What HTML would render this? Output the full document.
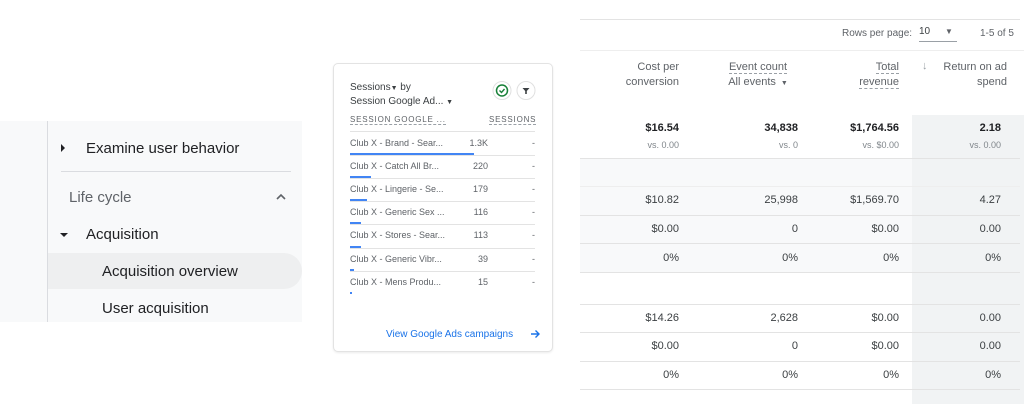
<!DOCTYPE html>
<html><head><meta charset="utf-8"><style>
*{margin:0;padding:0;box-sizing:border-box}
body{width:1024px;height:404px;background:#fff;position:relative;overflow:hidden;font-family:"Liberation Sans",Arial,sans-serif;color:#3c4043}
.a{position:absolute;white-space:nowrap}
.nav{position:absolute;left:0;top:121px;width:302px;height:201px;background:#f8f9fa}
.nt{font-size:15px;color:#202124}
.card{position:absolute;left:333px;top:63px;width:220px;height:289px;border:1px solid #e3e3e3;border-radius:5px;background:#fff;box-shadow:0 1px 2px rgba(0,0,0,.08)}
.r{font-size:9px;color:#5f6368}
.ln{position:absolute;height:1px;background:#e3e3e3}
.bar{position:absolute;height:2px;background:#4285f4}
.t{font-size:11px;color:#3c4043;text-align:right}
.v{font-size:9px;color:#80868b;text-align:right}
</style></head><body>
<div class="nav"></div>
<div class="a" style="left:47px;top:121px;width:1px;height:201px;background:#dadce0"></div>
<div class="a" style="left:48px;top:253px;width:254px;height:36px;background:#eeeff0;border-radius:0 18px 18px 0"></div>
<div class="a" style="left:61px;top:144px;width:0;height:0;border-top:4px solid transparent;border-bottom:4px solid transparent;border-left:4px solid #202124"></div>
<div class="a nt" style="left:86px;top:140px">Examine user behavior</div>
<div class="a" style="left:61px;top:171px;width:230px;height:1px;background:#dadce0"></div>
<div class="a nt" style="left:69px;top:189px;color:#5f6368">Life cycle</div>
<svg class="a" style="left:275px;top:193px" width="12" height="8"><path d="M2 6 L6 2 L10 6" stroke="#5f6368" stroke-width="1.6" fill="none"/></svg>
<div class="a" style="left:60px;top:233px;width:0;height:0;border-left:4px solid transparent;border-right:4px solid transparent;border-top:4px solid #202124"></div>
<div class="a nt" style="left:86px;top:226px">Acquisition</div>
<div class="a nt" style="left:102px;top:263px">Acquisition overview</div>
<div class="a nt" style="left:102px;top:300px">User acquisition</div>

<div class="card"></div>
<div class="a" style="left:350px;top:82px;font-size:10px;color:#3c4043">Sessions<span style="font-size:7px">▼</span> by</div>
<div class="a" style="left:350px;top:96px;font-size:10px;color:#3c4043">Session Google Ad... <span style="font-size:7px">▼</span></div>
<svg class="a" style="left:492px;top:80px" width="46" height="21"><circle cx="10" cy="10.5" r="9" fill="#fff" stroke="#e0e0e0"/><circle cx="10" cy="10.5" r="5.5" fill="none" stroke="#188038" stroke-width="1.5"/><path d="M7.5 10.5l2 2 3-3.5" stroke="#188038" stroke-width="1.4" fill="none"/><circle cx="34" cy="10.5" r="9" fill="#fff" stroke="#e0e0e0"/><path d="M30.5 8h7l-2.7 3v3h-1.6v-3z" fill="#3c4043"/></svg>
<div class="a" style="left:350px;top:115px;font-size:8px;letter-spacing:.8px;color:#5f6368;border-bottom:1px dashed #9aa0a6">SESSION GOOGLE ...</div>
<div class="a" style="left:489px;top:115px;font-size:8px;letter-spacing:.8px;color:#5f6368;border-bottom:1px dashed #9aa0a6">SESSIONS</div>
<div class="ln" style="left:350px;top:131px;width:185px"></div>
<div class="a r" style="left:350px;top:138px">Club X - Brand - Sear...</div><div class="a r" style="left:440px;top:138px;width:48px;text-align:right">1.3K</div><div class="a r" style="left:532px;top:138px">-</div>
<div class="bar" style="left:350px;top:153px;width:124px"></div><div class="ln" style="left:350px;top:155px;width:185px"></div>
<div class="a r" style="left:350px;top:161px">Club X - Catch All Br...</div><div class="a r" style="left:440px;top:161px;width:48px;text-align:right">220</div><div class="a r" style="left:532px;top:161px">-</div>
<div class="bar" style="left:350px;top:176px;width:21px"></div><div class="ln" style="left:350px;top:178px;width:185px"></div>
<div class="a r" style="left:350px;top:184px">Club X - Lingerie - Se...</div><div class="a r" style="left:440px;top:184px;width:48px;text-align:right">179</div><div class="a r" style="left:532px;top:184px">-</div>
<div class="bar" style="left:350px;top:199px;width:17px"></div><div class="ln" style="left:350px;top:201px;width:185px"></div>
<div class="a r" style="left:350px;top:207px">Club X - Generic Sex ...</div><div class="a r" style="left:440px;top:207px;width:48px;text-align:right">116</div><div class="a r" style="left:532px;top:207px">-</div>
<div class="bar" style="left:350px;top:222px;width:11px"></div><div class="ln" style="left:350px;top:224px;width:185px"></div>
<div class="a r" style="left:350px;top:230px">Club X - Stores - Sear...</div><div class="a r" style="left:440px;top:230px;width:48px;text-align:right">113</div><div class="a r" style="left:532px;top:230px">-</div>
<div class="bar" style="left:350px;top:246px;width:11px"></div><div class="ln" style="left:350px;top:248px;width:185px"></div>
<div class="a r" style="left:350px;top:254px">Club X - Generic Vibr...</div><div class="a r" style="left:440px;top:254px;width:48px;text-align:right">39</div><div class="a r" style="left:532px;top:254px">-</div>
<div class="bar" style="left:350px;top:269px;width:4px"></div><div class="ln" style="left:350px;top:271px;width:185px"></div>
<div class="a r" style="left:350px;top:277px">Club X - Mens Produ...</div><div class="a r" style="left:440px;top:277px;width:48px;text-align:right">15</div><div class="a r" style="left:532px;top:277px">-</div>
<div class="bar" style="left:350px;top:292px;width:2px"></div>
<div class="a" style="left:386px;top:329px;font-size:10px;color:#1a73e8">View Google Ads campaigns</div>
<svg class="a" style="left:529px;top:328px" width="12" height="12"><path d="M2 6h8M6.5 2.5L10 6 6.5 9.5" stroke="#1a73e8" stroke-width="1.4" fill="none"/></svg>

<!-- table -->
<div class="a" style="left:580px;top:186px;width:444px;height:86px;background:#f8f9fa"></div>
<div class="a" style="left:580px;top:158px;width:444px;height:28px;background:#f8f9fa"></div>
<div class="a" style="left:912px;top:115px;width:112px;height:289px;background:#f1f3f4"></div>
<div class="ln" style="left:580px;top:19px;width:440px"></div>
<div class="a" style="left:842px;top:28px;font-size:10px;color:#5f6368">Rows per page:</div>
<div class="a" style="left:919px;top:26px;font-size:10px;color:#3c4043">10</div>
<div class="a" style="left:945px;top:27px;font-size:8px;color:#5f6368">▼</div>
<div class="a" style="left:919px;top:41px;width:38px;height:1px;background:#9aa0a6"></div>
<div class="a" style="left:980px;top:28px;font-size:10px;color:#5f6368">1-5 of 5</div>
<div class="ln" style="left:580px;top:50px;width:444px;background:#eee"></div>
<div class="a t" style="left:580px;top:60px;width:99px;line-height:15px;color:#5f6368">Cost per<br>conversion</div>
<div class="a t" style="left:715px;top:60px;width:86px;line-height:15px;color:#5f6368;text-align:center"><span style="border-bottom:1px dashed #9aa0a6">Event count</span><br>All events <span style="font-size:7px">&nbsp;▼</span></div>
<div class="a t" style="left:800px;top:60px;width:99px;line-height:15px;color:#5f6368"><span style="border-bottom:1px dashed #9aa0a6">Total</span><br><span style="border-bottom:1px dashed #9aa0a6">revenue</span></div>
<div class="a" style="left:922px;top:60px;font-size:11px;color:#9aa0a6">↓</div>
<div class="a t" style="left:900px;top:60px;width:107px;line-height:15px;color:#5f6368">Return on ad<br>spend</div>

<div class="a t" style="left:580px;top:122px;width:99px;font-weight:bold;color:#202124">$16.54</div>
<div class="a t" style="left:700px;top:122px;width:98px;font-weight:bold;color:#202124">34,838</div>
<div class="a t" style="left:800px;top:122px;width:99px;font-weight:bold;color:#202124">$1,764.56</div>
<div class="a t" style="left:900px;top:122px;width:101px;font-weight:bold;color:#202124">2.18</div>
<div class="a v" style="left:580px;top:140px;width:99px">vs. 0.00</div>
<div class="a v" style="left:700px;top:140px;width:98px">vs. 0</div>
<div class="a v" style="left:800px;top:140px;width:99px">vs. $0.00</div>
<div class="a v" style="left:900px;top:140px;width:101px">vs. 0.00</div>
<div class="ln" style="left:580px;top:158px;width:440px"></div>
<div class="ln" style="left:580px;top:186px;width:440px;background:#eee"></div>
<div class="ln" style="left:580px;top:215px;width:440px"></div>
<div class="ln" style="left:580px;top:243px;width:440px"></div>
<div class="ln" style="left:580px;top:272px;width:440px"></div>
<div class="ln" style="left:580px;top:304px;width:440px"></div>
<div class="ln" style="left:580px;top:332px;width:440px"></div>
<div class="ln" style="left:580px;top:361px;width:440px"></div>
<div class="ln" style="left:580px;top:389px;width:440px"></div>

<div class="a t" style="left:580px;top:194px;width:99px">$10.82</div><div class="a t" style="left:700px;top:194px;width:98px">25,998</div><div class="a t" style="left:800px;top:194px;width:99px">$1,569.70</div><div class="a t" style="left:900px;top:194px;width:101px">4.27</div>
<div class="a t" style="left:580px;top:223px;width:99px">$0.00</div><div class="a t" style="left:700px;top:223px;width:98px">0</div><div class="a t" style="left:800px;top:223px;width:99px">$0.00</div><div class="a t" style="left:900px;top:223px;width:101px">0.00</div>
<div class="a t" style="left:580px;top:252px;width:99px">0%</div><div class="a t" style="left:700px;top:252px;width:98px">0%</div><div class="a t" style="left:800px;top:252px;width:99px">0%</div><div class="a t" style="left:900px;top:252px;width:101px">0%</div>
<div class="a t" style="left:580px;top:312px;width:99px">$14.26</div><div class="a t" style="left:700px;top:312px;width:98px">2,628</div><div class="a t" style="left:800px;top:312px;width:99px">$0.00</div><div class="a t" style="left:900px;top:312px;width:101px">0.00</div>
<div class="a t" style="left:580px;top:340px;width:99px">$0.00</div><div class="a t" style="left:700px;top:340px;width:98px">0</div><div class="a t" style="left:800px;top:340px;width:99px">$0.00</div><div class="a t" style="left:900px;top:340px;width:101px">0.00</div>
<div class="a t" style="left:580px;top:369px;width:99px">0%</div><div class="a t" style="left:700px;top:369px;width:98px">0%</div><div class="a t" style="left:800px;top:369px;width:99px">0%</div><div class="a t" style="left:900px;top:369px;width:101px">0%</div>
</body></html>
